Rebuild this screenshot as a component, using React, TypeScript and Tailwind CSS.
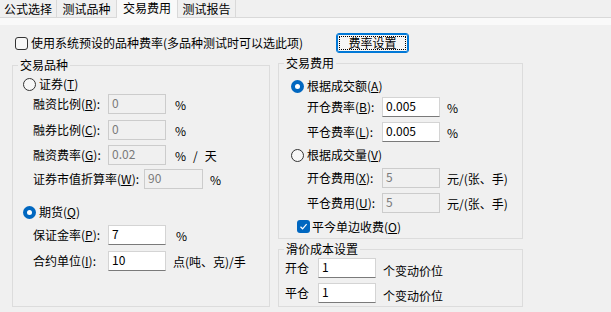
import React from "react";

const tabs = [
  { label: "公式选择", w: "w-[57px]", active: false },
  { label: "测试品种", w: "w-[60px]", active: false },
  { label: "交易费用", w: "w-[62px]", active: true },
  { label: "测试报告", w: "w-[58px]", active: false },
];

function Mn({ k }: { k: string }) {
  return (
    <>
      (<u className="underline-offset-[1px]">{k}</u>)
    </>
  );
}

function Radio({ on }: { on?: boolean }) {
  return on ? (
    <span className="flex h-[13px] w-[13px] shrink-0 items-center justify-center rounded-full bg-[#0067c0]">
      <span className="h-[5px] w-[5px] rounded-full bg-white" />
    </span>
  ) : (
    <span className="h-[13px] w-[13px] shrink-0 rounded-full border border-[#333333] bg-[#f7f7f7]" />
  );
}

function Field({ value, disabled, w }: { value: string; disabled?: boolean; w: string }) {
  return (
    <div
      className={
        disabled
          ? `${w} h-[20px] shrink-0 border border-[#cccccc] bg-[#f0f0f0] pl-[3px] pt-[1px] text-[#7a7a7a]`
          : `${w} h-[20px] shrink-0 border border-[#d4d4d4] border-b-[#7a7a7a] bg-white pl-[3px] pt-[1px] text-black`
      }
    >
      {value}
    </div>
  );
}

function Row({
  label,
  lw,
  value,
  fw,
  unit,
  gap,
  disabled,
  className,
}: {
  label: React.ReactNode;
  lw: string;
  value: string;
  fw: string;
  unit: React.ReactNode;
  gap: string;
  disabled?: boolean;
  className: string;
}) {
  return (
    <div className={`flex h-[20px] items-center ${className}`}>
      <span className={`${lw} shrink-0 whitespace-nowrap`}>{label}</span>
      <Field value={value} disabled={disabled} w={fw} />
      <span className={`${gap} whitespace-nowrap pt-[2px]`}>{unit}</span>
    </div>
  );
}

export default function App() {
  return (
    <div className="h-[312px] w-[611px] overflow-hidden bg-[#f0f0f0] font-['Noto_Sans_CJK_SC','Noto_Sans',sans-serif] text-[12px] leading-[14px] text-black">
      {/* tab strip */}
      <div className="flex h-[18px] items-end border-b border-[#d9d9d9]">
        {tabs.map((t) =>
          t.active ? (
            <div
              key={t.label}
              className={`${t.w} relative z-10 -ml-[1px] mb-[-1px] flex h-[19px] justify-center border border-b-0 border-[#d9d9d9] bg-[#f9f9f9] pt-[1px]`}
            >
              {t.label}
            </div>
          ) : (
            <div
              key={t.label}
              className={`${t.w} flex h-[17px] justify-center border-r border-[#d9d9d9] bg-[#f0f0f0] pt-[2px]`}
            >
              {t.label}
            </div>
          )
        )}
      </div>
      <div className="h-[7px] bg-[#f9f9f9]" />

      {/* preset checkbox + button */}
      <div className="mt-[8px] flex h-[20px] items-center pl-[15px]">
        <span className="h-[13px] w-[13px] shrink-0 rounded-[3px] border border-[#333333] bg-[#f7f7f7]" />
        <span className="ml-[3px] w-[305px] whitespace-nowrap">使用系统预设的品种费率(多品种测试时可以选此项)</span>
        <button className="flex h-[20px] w-[73px] rounded-[3px] border border-[#0078d7] bg-[#f6f6f6] p-[2px] shadow-[inset_0_0_0_1px_#0078d7]">
          <span className="flex flex-1 items-center justify-center rounded-[1px] border border-dotted border-black">费率设置</span>
        </button>
      </div>

      <div className="mt-[3px] flex items-start gap-[8px] pl-[12px]">
        {/* 交易品种 */}
        <fieldset className="mt-[2px] h-[249px] w-[258px] border border-[#dcdcdc]">
          <legend className="ml-[5px] px-[2px] leading-[14px]">交易品种</legend>
          <div className="flex flex-col pl-[10px]">
            <div className="mt-[5px] flex h-[14px] items-center">
              <Radio />
              <span className="ml-[3px]">证券<Mn k="T" /></span>
            </div>
            <Row className="mt-[3px] pl-[10px]" label={<>融资比例<Mn k="R" />:</>} lw="w-[75px]" value="0" fw="w-[58px]" unit="%" gap="ml-[9px]" disabled />
            <Row className="mt-[6px] pl-[10px]" label={<>融券比例<Mn k="C" />:</>} lw="w-[75px]" value="0" fw="w-[58px]" unit="%" gap="ml-[9px]" disabled />
            <Row
              className="mt-[5px] pl-[10px]"
              label={<>融资费率<Mn k="G" />:</>}
              lw="w-[75px]"
              value="0.02"
              fw="w-[58px]"
              unit={
                <span className="flex gap-[7px]">
                  <span>%</span>
                  <span>/</span>
                  <span>天</span>
                </span>
              }
              gap="ml-[9px]"
              disabled
            />
            <Row className="mt-[4px] pl-[10px]" label={<>证券市值折算率<Mn k="W" />:</>} lw="w-[111px]" value="90" fw="w-[59px]" unit="%" gap="ml-[7px]" disabled />
            <div className="mt-[16px] flex h-[14px] items-center">
              <Radio on />
              <span className="ml-[3px]">期货<Mn k="Q" /></span>
            </div>
            <Row className="mt-[6px] pl-[10px]" label={<>保证金率<Mn k="P" />:</>} lw="w-[75px]" value="7" fw="w-[58px]" unit="%" gap="ml-[10px]" />
            <Row className="mt-[6px] pl-[10px]" label={<>合约单位<Mn k="I" />:</>} lw="w-[75px]" value="10" fw="w-[58px]" unit="点(吨、克)/手" gap="ml-[7px]" />
          </div>
        </fieldset>

        <div className="flex w-[245px] flex-col">
          {/* 交易费用 */}
          <fieldset className="h-[183px] border border-[#dcdcdc]">
            <legend className="ml-[5px] px-[2px] leading-[14px]">交易费用</legend>
            <div className="flex flex-col pl-[12px]">
              <div className="mt-[9px] flex h-[14px] items-center">
                <Radio on />
                <span className="ml-[3px]">根据成交额<Mn k="A" /></span>
              </div>
              <Row className="mt-[4px] pl-[16px]" label={<>开仓费率<Mn k="B" />:</>} lw="w-[75px]" value="0.005" fw="w-[58px]" unit="%" gap="ml-[7px]" />
              <Row className="mt-[5px] pl-[16px]" label={<>平仓费率<Mn k="L" />:</>} lw="w-[75px]" value="0.005" fw="w-[58px]" unit="%" gap="ml-[7px]" />
              <div className="mt-[6px] flex h-[14px] items-center">
                <Radio />
                <span className="ml-[3px]">根据成交量<Mn k="V" /></span>
              </div>
              <Row className="mt-[6px] pl-[16px]" label={<>开仓费用<Mn k="X" />:</>} lw="w-[75px]" value="5" fw="w-[58px]" unit="元/(张、手)" gap="ml-[7px]" disabled />
              <Row className="mt-[5px] pl-[16px]" label={<>平仓费用<Mn k="U" />:</>} lw="w-[75px]" value="5" fw="w-[58px]" unit="元/(张、手)" gap="ml-[7px]" disabled />
              <div className="mt-[7px] flex h-[13px] items-center pl-[6px]">
                <span className="flex h-[13px] w-[13px] shrink-0 items-center justify-center rounded-[3px] bg-[#0067c0]">
                  <svg width="9" height="9" viewBox="0 0 9 9" fill="none">
                    <path d="M1.5 4.8 L3.6 6.8 L7.6 2.2" stroke="white" strokeWidth="1.2" />
                  </svg>
                </span>
                <span className="ml-[2px]">平今单边收费<Mn k="O" /></span>
              </div>
            </div>
          </fieldset>

          {/* 滑价成本设置 */}
          <fieldset className="mt-[3px] h-[65px] border border-[#dcdcdc]">
            <legend className="ml-[5px] px-[2px] leading-[14px]">滑价成本设置</legend>
            <div className="flex flex-col pl-[6px]">
              <Row className="mt-[2px]" label="开仓" lw="w-[33px]" value="1" fw="w-[58px]" unit="个变动价位" gap="ml-[7px] mt-[4px]" />
              <Row className="mt-[5px]" label="平仓" lw="w-[33px]" value="1" fw="w-[58px]" unit="个变动价位" gap="ml-[7px] mt-[4px]" />
            </div>
          </fieldset>
        </div>
      </div>
    </div>
  );
}
